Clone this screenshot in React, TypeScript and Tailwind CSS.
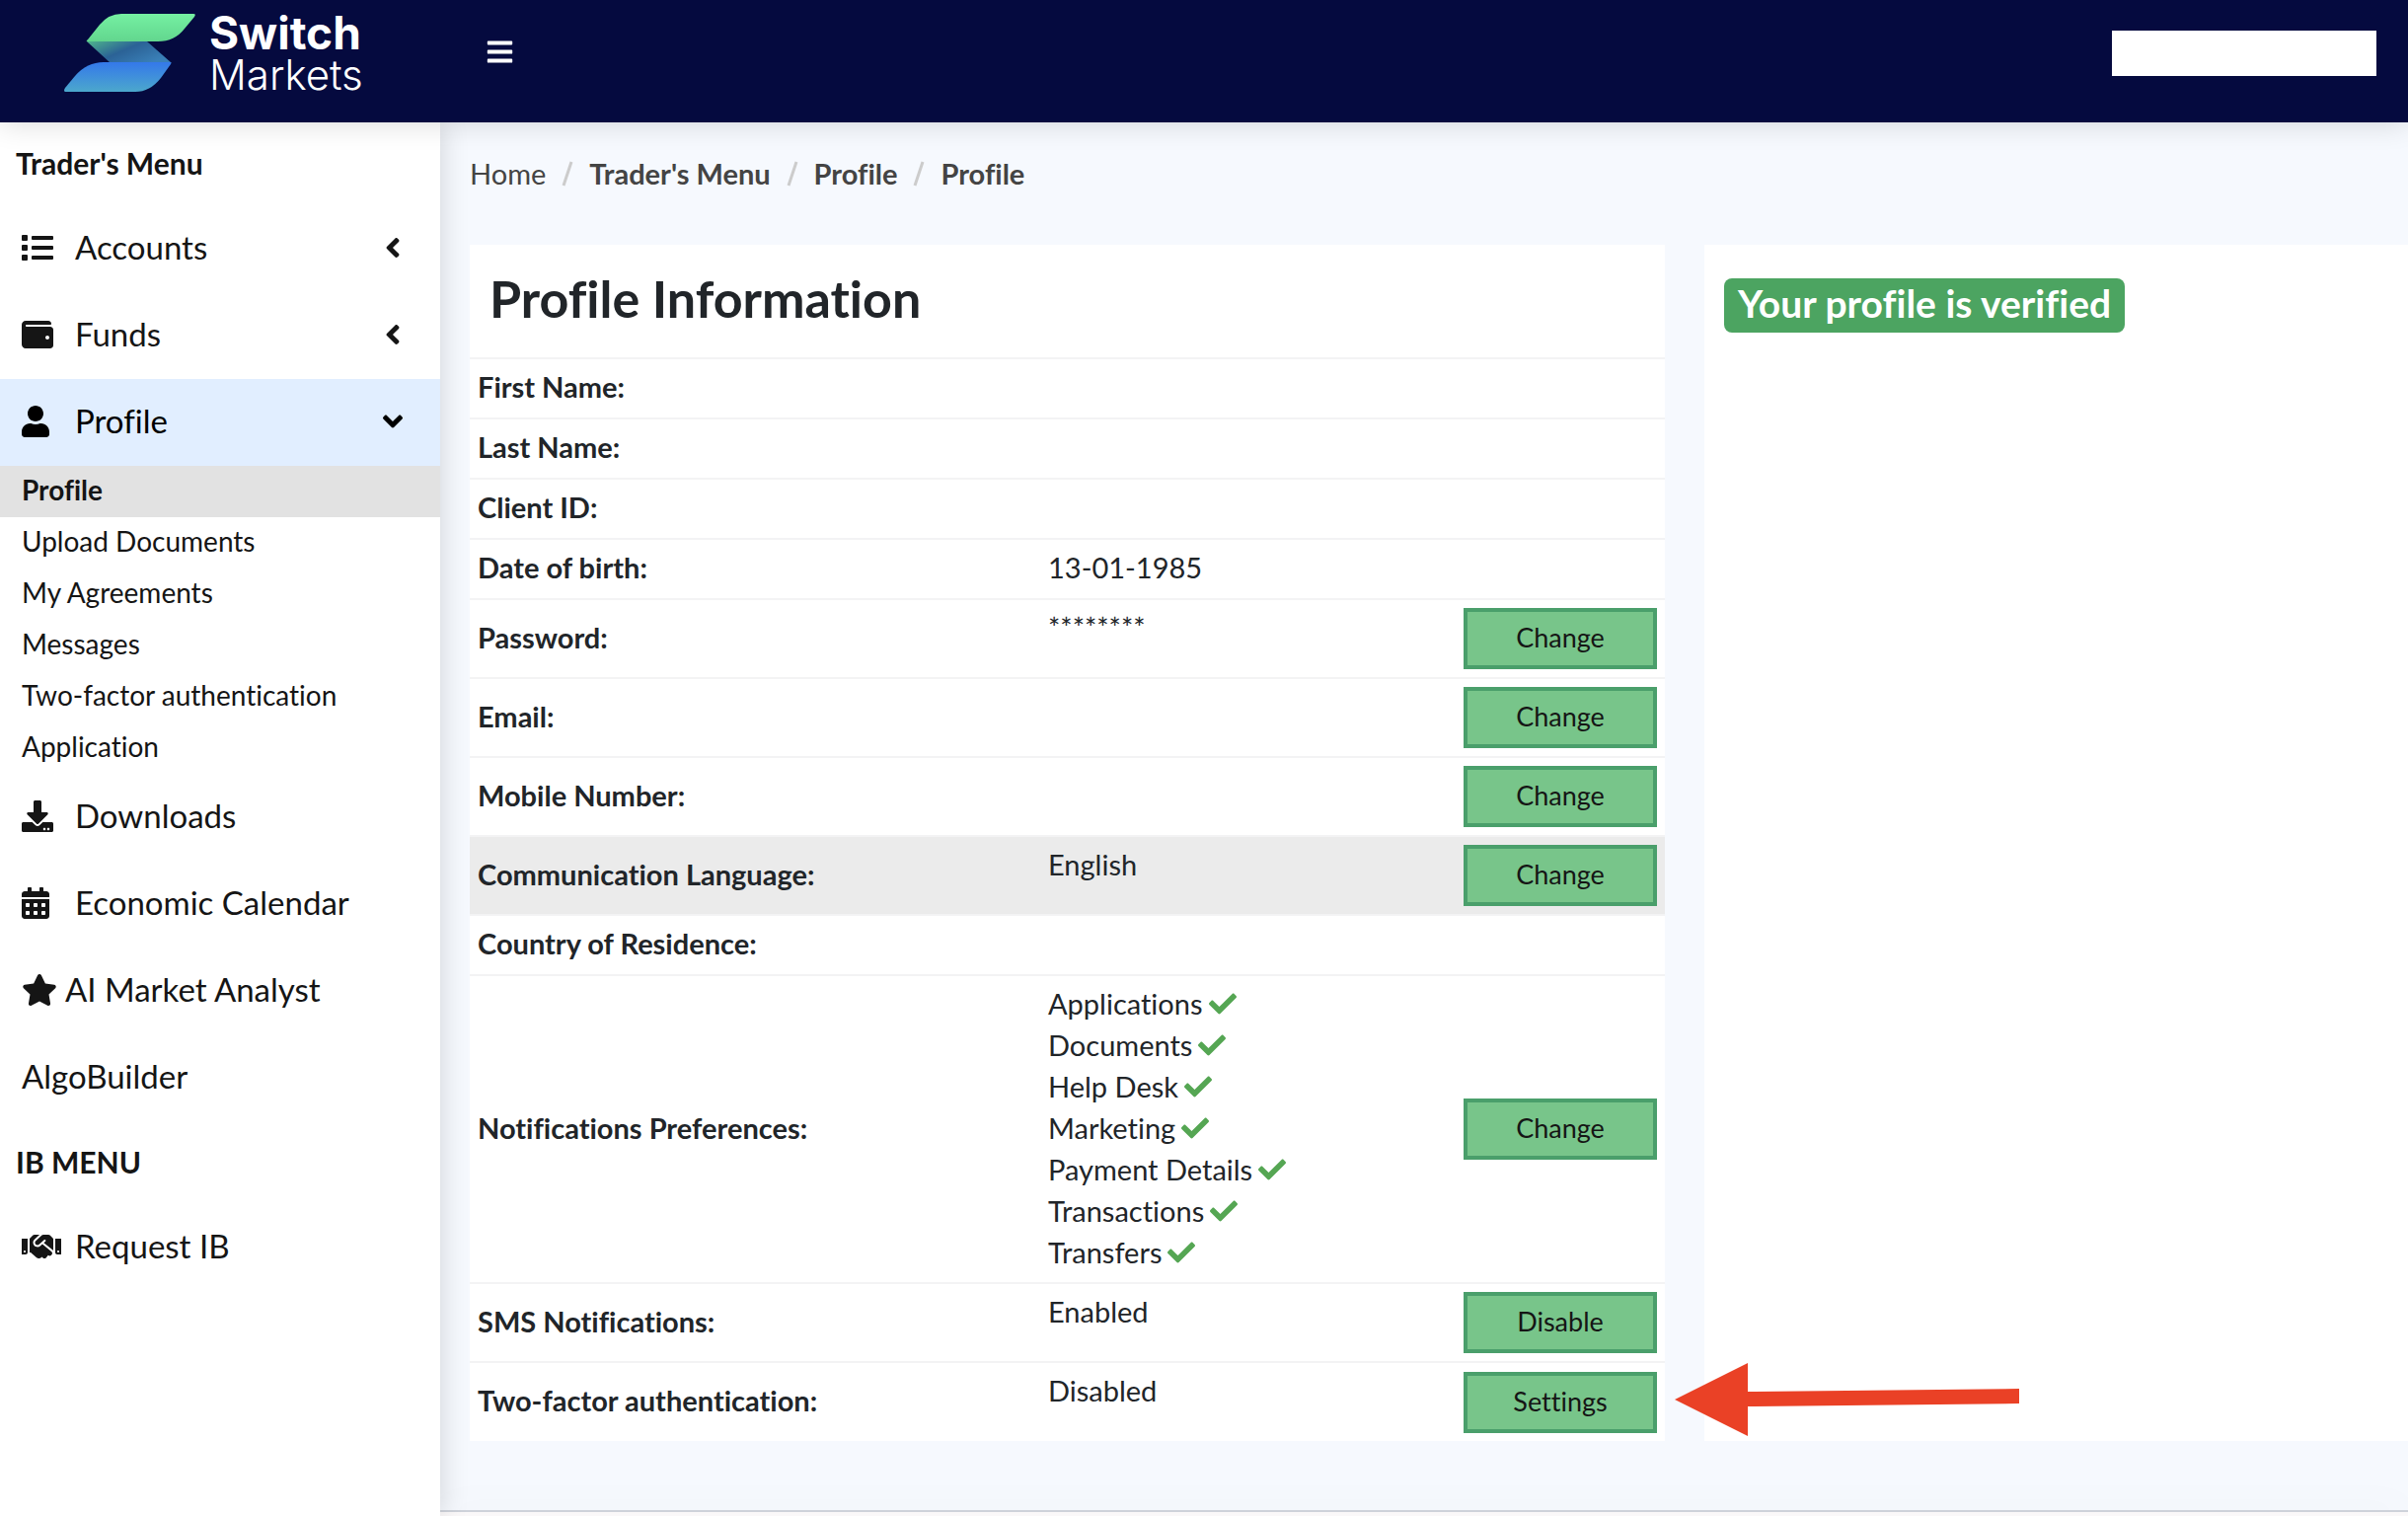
import React from 'react';
import {
  FaAngleDown,
  FaAngleLeft,
  FaBars,
  FaCalendarAlt,
  FaCheck,
  FaDownload,
  FaHandshake,
  FaList,
  FaStar,
  FaUser,
  FaWallet,
} from 'react-icons/fa';

interface MenuItemProps {
  label: string;
  icon?: React.ReactNode;
  arrow?: React.ReactNode;
  active?: boolean;
  tight?: boolean;
}

const MenuItem: React.FC<MenuItemProps> = ({ label, icon, arrow, active, tight }) => (
  <a
    href="#"
    className={`flex h-[88px] items-center pr-[38px] pb-[3px] pl-[22px] text-[33px] ${active ? 'bg-[#e1eeff] text-black' : 'text-[#151515]'}`}
  >
    {icon && <span className={tight ? 'w-11' : 'w-[54px]'}>{icon}</span>}
    <span className="flex-1">{label}</span>
    {arrow && <span className="flex w-5 justify-center">{arrow}</span>}
  </a>
);

const profileLinks = [
  'Profile',
  'Upload Documents',
  'My Agreements',
  'Messages',
  'Two-factor authentication',
  'Application',
];

const Logo = () => (
  <a href="#" aria-label="Switch Markets" className="flex items-start gap-[14px] pt-[14px] pl-[65px] text-white">
    <svg width="133" height="79" viewBox="0 0 133 79">
      <defs>
        <linearGradient id="top" x1="0" y1="0" x2="0" y2="1">
          <stop offset="0" stopColor="#75f0a2" />
          <stop offset="1" stopColor="#62d68e" />
        </linearGradient>
        <linearGradient id="mid" x1="0" y1="0" x2="1" y2="0.6">
          <stop offset="0" stopColor="#4fb58c" />
          <stop offset="0.5" stopColor="#2b6296" />
          <stop offset="1" stopColor="#3a80b8" />
        </linearGradient>
        <linearGradient id="low" x1="0" y1="0" x2="0" y2="1">
          <stop offset="0" stopColor="#3478ea" />
          <stop offset="1" stopColor="#4ca8cc" />
        </linearGradient>
      </defs>
      <path d="M23 28H84L109 50H47Z" fill="url(#mid)" />
      <path d="M23 28Q22 28 24 26L36 11Q45 0 58 0H131Q134 0 132 3L122 15Q112 28 95 28Z" fill="url(#top)" />
      <path d="M1 79Q-1 78 1 75L11 63Q23 49 40 49H107Q109 49 108 51L98 65Q87 79 72 79Z" fill="url(#low)" />
    </svg>
    <span className="flex flex-col font-['Inter',sans-serif]">
      <span className="text-[46px] leading-[38px] font-bold">Switch</span>
      <span className="text-[42px] leading-[48px] font-light">Markets</span>
    </span>
  </a>
);

const Sidebar = () => (
  <nav className="relative z-10 w-[446px] shrink-0 bg-white shadow-[0_0_28px_rgba(0,0,0,0.16)]">
    <h2 className="flex h-[84px] items-center pb-[2px] pl-4 text-[30px] font-bold text-[#151515]">Trader's Menu</h2>
    <MenuItem label="Accounts" icon={<FaList className="h-8 w-8" />} arrow={<FaAngleLeft className="h-8 w-4" />} />
    <MenuItem label="Funds" icon={<FaWallet className="h-8 w-8" />} arrow={<FaAngleLeft className="h-8 w-4" />} />
    <MenuItem label="Profile" active icon={<FaUser className="h-8 w-7" />} arrow={<FaAngleDown className="h-8 w-5" />} />
    <ul>
      {profileLinks.map((link, i) => (
        <li key={link}>
          <a
            href="#"
            className={`flex h-[52px] items-center pb-1 pl-[22px] text-[28px] text-[#151515] ${i === 0 ? 'bg-[#e2e2e2] font-bold' : ''}`}
          >
            {link}
          </a>
        </li>
      ))}
    </ul>
    <MenuItem label="Downloads" icon={<FaDownload className="h-8 w-8" />} />
    <MenuItem label="Economic Calendar" icon={<FaCalendarAlt className="h-8 w-7" />} />
    <MenuItem label="AI Market Analyst" tight icon={<FaStar className="h-8 w-9" />} />
    <MenuItem label="AlgoBuilder" />
    <h2 className="flex h-[84px] items-center pb-[2px] pl-4 text-[30px] font-bold text-[#151515]">IB MENU</h2>
    <MenuItem label="Request IB" icon={<FaHandshake className="h-8 w-10" />} />
  </nav>
);

const Slash = () => (
  <svg width="12" height="26" viewBox="0 0 12 26" className="mx-4">
    <path d="M2 25L10 1" stroke="#cccccc" strokeWidth="3" />
  </svg>
);

interface Row {
  label: string;
  value?: string;
  checks?: string[];
  action?: string;
  hover?: boolean;
  arrow?: boolean;
}

const rows: Row[] = [
  { label: 'First Name:' },
  { label: 'Last Name:' },
  { label: 'Client ID:' },
  { label: 'Date of birth:', value: '13-01-1985' },
  { label: 'Password:', value: '********', action: 'Change' },
  { label: 'Email:', action: 'Change' },
  { label: 'Mobile Number:', action: 'Change' },
  { label: 'Communication Language:', value: 'English', action: 'Change', hover: true },
  { label: 'Country of Residence:' },
  {
    label: 'Notifications Preferences:',
    checks: ['Applications', 'Documents', 'Help Desk', 'Marketing', 'Payment Details', 'Transactions', 'Transfers'],
    action: 'Change',
  },
  { label: 'SMS Notifications:', value: 'Enabled', action: 'Disable' },
  { label: 'Two-factor authentication:', value: 'Disabled', action: 'Settings', arrow: true },
];

const Arrow = () => (
  <svg width="350" height="76" viewBox="0 0 350 76" className="absolute top-0 left-full z-10 ml-[10px]">
    <path d="M0 37L74 0V29L349 26V41L74 44V74Z" fill="#ea4126" />
  </svg>
);

const ProfileTable = () => (
  <table className="w-full text-[29px] leading-[42px] text-[#212529]">
    <tbody>
      {rows.map((row) => (
        <tr
          key={row.label}
          className={`border-t-2 border-[#f3f3f4] ${row.action ? 'h-20' : 'h-[61px]'} ${row.hover ? 'bg-[#ebebeb]' : ''}`}
        >
          <th scope="row" className="w-[578px] px-2 pb-[3px] text-left font-bold">
            {row.label}
          </th>
          <td className="px-2 pt-[7px] pb-[9px] align-top">
            {row.value}
            {row.checks?.map((name) => (
              <div key={name} className="flex items-center gap-[6px]">
                {name}
                <FaCheck size={28} color="#55a653" />
              </div>
            ))}
          </td>
          <td className="relative w-[212px] px-2">
            {row.action && (
              <button
                type="button"
                className="block h-[62px] w-full border-4 border-[#4a9f6b] bg-[#78c58a] pb-[2px] text-[27px] text-[#151515]"
              >
                {row.action}
              </button>
            )}
            {row.arrow && <Arrow />}
          </td>
        </tr>
      ))}
    </tbody>
  </table>
);

const App = () => (
  <div className="flex min-h-screen flex-col bg-[#faf8f9] font-['Lato',sans-serif] [font-variant-ligatures:none]">
    <header className="relative z-20 flex h-[124px] bg-[#050a3f] shadow-[0_0_28px_rgba(0,0,0,0.16)]">
      <div className="w-[446px]">
        <Logo />
      </div>
      <button type="button" aria-label="Toggle menu" className="flex h-[104px] items-center px-[46px] text-white">
        <FaBars size={29} />
      </button>
      <div className="mt-[31px] mr-8 ml-auto h-[46px] w-[268px] bg-white" />
    </header>

    <div className="flex flex-1">
      <Sidebar />
      <div className="flex flex-1 flex-col">
        <main className="flex-1 bg-[#f6f9fe] pb-[70px] pl-[30px]">
          <nav aria-label="Breadcrumb" className="flex h-[124px] items-start pt-[31px] text-[29px] leading-[42px] text-[#444444]">
            <div className="flex items-center">
              <a href="#">Home</a>
              <Slash />
              <a href="#" className="font-bold">Trader's Menu</a>
              <Slash />
              <a href="#" className="font-bold">Profile</a>
              <Slash />
              <span className="font-bold">Profile</span>
            </div>
          </nav>
          <div className="grid grid-cols-[1211fr_713fr] gap-10">
            <section className="bg-white">
              <h1 className="flex h-[114px] items-center pb-[6px] pl-5 text-[52px] font-bold text-[#212529]">Profile Information</h1>
              <ProfileTable />
            </section>
            <section className="bg-white p-5 pt-[34px]">
              <span className="inline-block rounded-lg bg-[#4ca461] px-[14px] pb-1 text-[39px] leading-[51px] font-bold text-white">
                Your profile is verified
              </span>
            </section>
          </div>
        </main>
        <footer className="h-[6px] border-t-2 border-[#ced2da] shadow-[0_0_40px_rgba(0,0,0,0.08)]" />
      </div>
    </div>
  </div>
);

export default App;
